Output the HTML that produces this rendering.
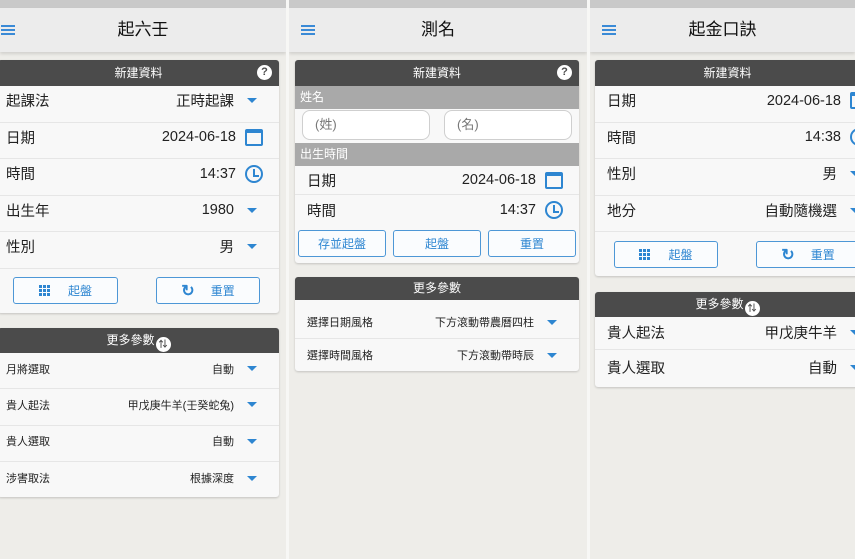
<!DOCTYPE html>
<html><head><meta charset="utf-8"><style>
*{margin:0;padding:0;box-sizing:border-box}
body{width:855px;height:559px;overflow:hidden;background:#eeede9;font-family:"Liberation Sans","Noto Sans CJK TC",sans-serif;position:relative;color:#222}
.sb{position:absolute;top:0;height:8px;background:#c9c9c9}
.ab{position:absolute;top:8px;height:44px;background:#ececec;box-shadow:0 2px 3px rgba(0,0,0,.12);font-size:17px;text-align:center;line-height:44px;color:#111}
.menu{position:absolute;top:17px;width:14px;height:10px;border-top:2px solid #3a8ad6;border-bottom:2px solid #3a8ad6}
.menu:after{content:"";position:absolute;left:0;right:0;top:2px;border-top:2px solid #3a8ad6}
.sep{position:absolute;top:0;width:3px;height:559px;background:#f7f7f5}
.card{position:absolute;background:#f8f8f8;border-radius:3px;box-shadow:0 1px 2px rgba(0,0,0,.18);overflow:hidden}
.hd{background:#4b4b4b;color:#fff;font-size:12px;text-align:center;position:relative}
.q{position:absolute;right:7px;top:5px;width:15px;height:15px;border-radius:50%;background:#fff;color:#4b4b4b;font-size:11px;font-weight:bold;line-height:15px;text-align:center}
.sw{display:inline-block;width:15px;height:15px;border-radius:50%;background:#fff;color:#4b4b4b;font-size:9px;line-height:15px;vertical-align:-3px;font-weight:bold;margin-left:1px}
.row{display:flex;align-items:center;padding-left:8px;border-bottom:1px solid #e6e6e6;font-size:14.5px}
.up .row{padding-bottom:6px}
.row .v{margin-left:auto}
.sm{font-size:11px}
.tri{width:0;height:0;border-left:5px solid transparent;border-right:5px solid transparent;border-top:5px solid #2e86d1;margin:0 22px 0 13px}
.cal{width:18px;height:17px;border:2px solid #2e86d1;border-top-width:4px;border-radius:2px;margin:0 16px 0 9px;position:relative}
.clk{width:18px;height:18px;border:2px solid #2e86d1;border-radius:50%;margin:0 16px 0 9px;position:relative}
.clk:after{content:"";position:absolute;left:6px;top:2px;width:4px;height:6px;border-left:2px solid #2e86d1;border-bottom:2px solid #2e86d1}
.btn{position:absolute;height:27px;border:1px solid #4d97d6;border-radius:3px;background:#fafcfe;color:#2e86d1;font-size:12px;display:flex;align-items:center;justify-content:center}
.grid{display:inline-grid;grid-template-columns:repeat(3,3px);gap:1px;margin-right:18px}
.grid i{width:3px;height:3px;background:#2e86d1}
.gbar{background:#a9a9a9;color:#fff;font-size:12px;padding-left:5px}
.inp{position:absolute;height:30px;border:1px solid #cfcfcf;border-radius:8px;background:#fff;color:#777;font-size:13px;line-height:28px;padding-left:12px}
</style></head><body>

<div class="sb" style="left:0;width:286px"></div>
<div class="sb" style="left:289px;width:298px"></div>
<div class="sb" style="left:590px;width:265px"></div>
<div class="ab" style="left:0;width:286px">起六壬</div>
<div class="ab" style="left:289px;width:298px">測名</div>
<div class="ab" style="left:590px;width:265px">起金口訣</div>
<div class="menu" style="left:1px;top:25px"></div>
<div class="menu" style="left:301px;top:25px"></div>
<div class="menu" style="left:602px;top:25px"></div>
<div class="sep" style="left:286px"></div>
<div class="sep" style="left:587px"></div>

<!-- Panel 1 -->
<div class="card up" style="left:-2px;top:60px;width:281px;height:253px">
<div class="hd" style="height:26px;line-height:26px">新建資料<span class="q">?</span></div>
<div class="row" style="height:36.5px">起課法<span class="v">正時起課</span><span class="tri"></span></div>
<div class="row" style="height:36.5px">日期<span class="v">2024-06-18</span><span class="cal"></span></div>
<div class="row" style="height:36.5px">時間<span class="v">14:37</span><span class="clk"></span></div>
<div class="row" style="height:36.5px">出生年<span class="v">1980</span><span class="tri"></span></div>
<div class="row" style="height:36.5px">性別<span class="v">男</span><span class="tri"></span></div>
</div>
<div class="btn" style="left:13px;top:277px;width:105px"><span class="grid"><i></i><i></i><i></i><i></i><i></i><i></i><i></i><i></i><i></i></span>起盤</div>
<div class="btn" style="left:156px;top:277px;width:104px"><span style="font-size:16px;font-weight:bold;margin-right:16px">↻</span>重置</div>

<div class="card" style="left:-2px;top:328px;width:281px;height:169px">
<div class="hd" style="height:25px;line-height:25px">更多參數<span class="sw">⇅</span></div>
<div class="row sm" style="height:36px;padding-bottom:4px">月將選取<span class="v">自動</span><span class="tri"></span></div>
<div class="row sm" style="height:36.5px;padding-bottom:4px">貴人起法<span class="v">甲戊庚牛羊(壬癸蛇兔)</span><span class="tri"></span></div>
<div class="row sm" style="height:36.5px;padding-bottom:4px">貴人選取<span class="v">自動</span><span class="tri"></span></div>
<div class="row sm" style="height:36px;border:0;padding-bottom:4px">涉害取法<span class="v">根據深度</span><span class="tri"></span></div>
</div>

<!-- Panel 2 -->
<div class="card" style="left:295px;top:60px;width:284px;height:203px">
<div class="hd" style="height:26px;line-height:26px">新建資料<span class="q">?</span></div>
<div class="gbar" style="height:23px;line-height:23px">姓名</div>
<div style="height:34px"></div>
<div class="gbar" style="height:23px;line-height:23px">出生時間</div>
<div class="row" style="height:29px;padding-left:12px">日期<span class="v">2024-06-18</span><span class="cal" style="margin-right:16px"></span></div>
<div class="row" style="height:30px;padding-left:12px;border:0">時間<span class="v">14:37</span><span class="clk"></span></div>
</div>
<div class="inp" style="left:302px;top:110px;width:128px">(姓)</div>
<div class="inp" style="left:444px;top:110px;width:128px">(名)</div>
<div class="btn" style="left:298px;top:230px;width:88px">存並起盤</div>
<div class="btn" style="left:393px;top:230px;width:88px">起盤</div>
<div class="btn" style="left:488px;top:230px;width:88px">重置</div>

<div class="card" style="left:295px;top:277px;width:284px;height:94px">
<div class="hd" style="height:23px;line-height:23px">更多參數</div>
<div class="row sm" style="height:39px;padding:6px 0 0 12px">選擇日期風格<span class="v">下方滾動帶農曆四柱</span><span class="tri"></span></div>
<div class="row sm" style="height:32px;padding-left:12px;border:0">選擇時間風格<span class="v">下方滾動帶時辰</span><span class="tri"></span></div>
</div>

<!-- Panel 3 -->
<div class="card up" style="left:595px;top:60px;width:275px;height:216px">
<div class="hd" style="height:26px;line-height:26px;padding-right:10px">新建資料</div>
<div class="row" style="height:36.5px;padding-left:12px">日期<span class="v">2024-06-18</span><span class="cal" style="margin-right:2px"></span></div>
<div class="row" style="height:36.5px;padding-left:12px">時間<span class="v">14:38</span><span class="clk" style="margin-right:2px"></span></div>
<div class="row" style="height:36.5px;padding-left:12px">性別<span class="v">男</span><span class="tri" style="margin-right:10px"></span></div>
<div class="row" style="height:36.5px;padding-left:12px">地分<span class="v">自動隨機選</span><span class="tri" style="margin-right:10px"></span></div>
</div>
<div class="btn" style="left:614px;top:241px;width:104px"><span class="grid"><i></i><i></i><i></i><i></i><i></i><i></i><i></i><i></i><i></i></span>起盤</div>
<div class="btn" style="left:756px;top:241px;width:104px"><span style="font-size:16px;font-weight:bold;margin-right:16px">↻</span>重置</div>

<div class="card" style="left:595px;top:292px;width:275px;height:95px">
<div class="hd" style="height:25px;line-height:25px;padding-right:10px">更多參數<span class="sw">⇅</span></div>
<div class="row" style="height:33px;padding-left:12px;padding-bottom:2px">貴人起法<span class="v">甲戊庚牛羊</span><span class="tri" style="margin-right:10px"></span></div>
<div class="row" style="height:37px;padding-left:12px;border:0;padding-bottom:2px">貴人選取<span class="v">自動</span><span class="tri" style="margin-right:10px"></span></div>
</div>
</body></html>
